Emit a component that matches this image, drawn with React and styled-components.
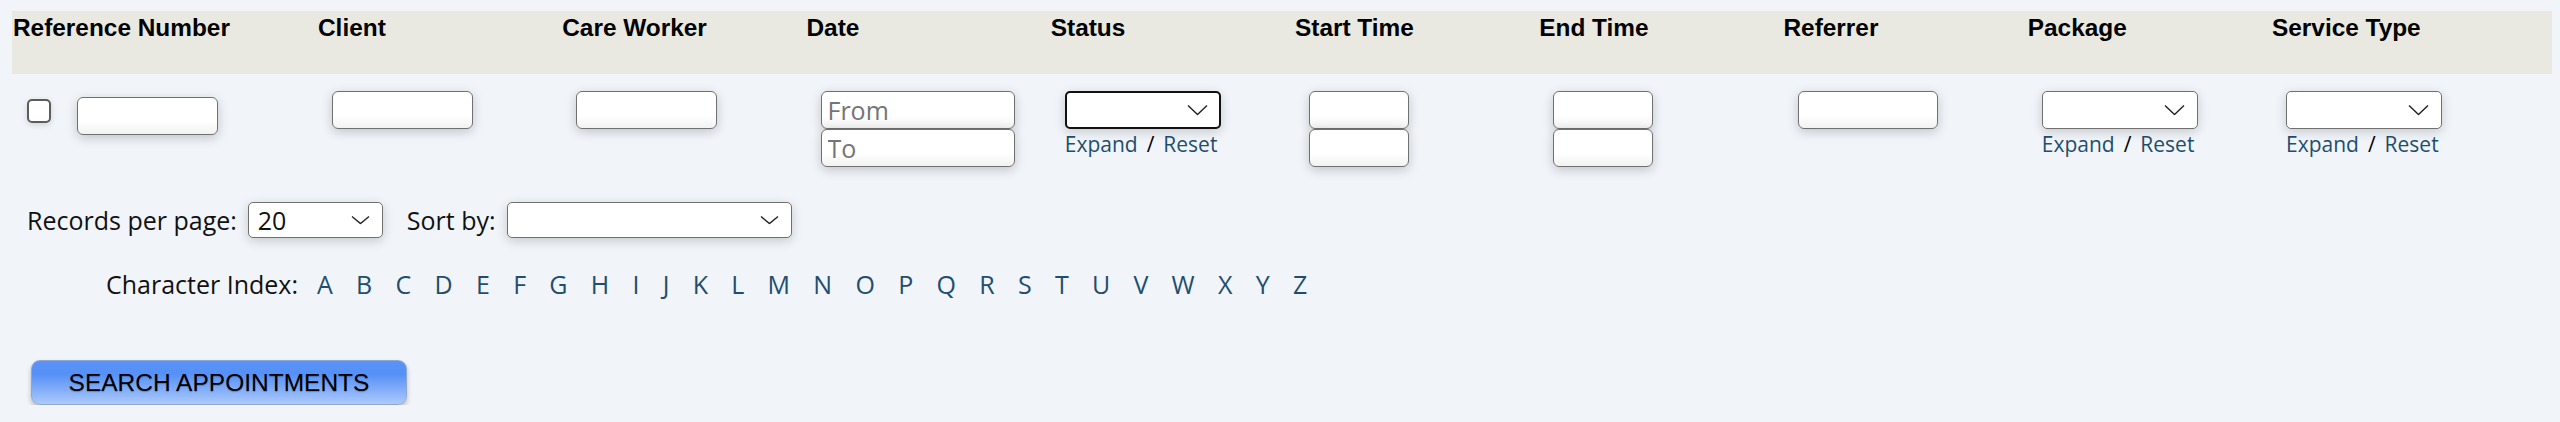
import styled, { createGlobalStyle } from 'styled-components';

const GlobalStyle = createGlobalStyle`
  html, body {
    margin: 0;
    padding: 0;
    background: #f1f5f9;
  }
  body {
    font-family: 'Open Sans', 'Liberation Sans', sans-serif;
    color: #111;
  }
  * {
    box-sizing: border-box;
  }
`;

const columns = [
  { title: 'Reference Number', kind: 'ref' },
  { title: 'Client', kind: 'text', width: 141 },
  { title: 'Care Worker', kind: 'text', width: 141 },
  { title: 'Date', kind: 'range', width: 194, placeholders: ['From', 'To'] },
  { title: 'Status', kind: 'select', focused: true },
  { title: 'Start Time', kind: 'range', width: 100 },
  { title: 'End Time', kind: 'range', width: 100 },
  { title: 'Referrer', kind: 'text', width: 140 },
  { title: 'Package', kind: 'select' },
  { title: 'Service Type', kind: 'select' },
];

const letters = 'ABCDEFGHIJKLMNOPQRSTUVWXYZ'.split('');

function Chevron({ w = 21, h = 11 }) {
  return (
    <ChevronIcon width={w} height={h} viewBox={`0 0 ${w} ${h}`}>
      <path
        d={`M1 1 L${w / 2} ${h - 1} L${w - 1} 1`}
        fill="none"
        stroke="#222"
        strokeWidth="1.4"
      />
    </ChevronIcon>
  );
}

function Dropdown({ width, height, value, focused, small }) {
  return (
    <SelectWrap $w={width}>
      <Select $h={height} $focused={focused} defaultValue={value || ''}>
        <option value={value || ''}>{value || ''}</option>
      </Select>
      {small ? <Chevron w={19} h={9} /> : <Chevron />}
    </SelectWrap>
  );
}

function FilterControl({ col }) {
  if (col.kind === 'ref') {
    return (
      <RefGroup>
        <Check type="checkbox" />
        <TextBox $w={141} $top={6} />
      </RefGroup>
    );
  }
  if (col.kind === 'text') return <TextBox $w={col.width} />;
  if (col.kind === 'range') {
    const ph = col.placeholders || ['', ''];
    return (
      <Stack>
        <TextBox $w={col.width} placeholder={ph[0]} />
        <TextBox $w={col.width} placeholder={ph[1]} />
      </Stack>
    );
  }
  return (
    <Stack>
      <Dropdown width={156} height={38} focused={col.focused} />
      <Actions>
        <ActionLink href="#">Expand</ActionLink>
        <Slash>/</Slash>
        <ActionLink href="#">Reset</ActionLink>
      </Actions>
    </Stack>
  );
}

export default function App() {
  return (
    <>
      <GlobalStyle />
      <Page>
        <HeadRow>
          {columns.map(c => (
            <HeadCell key={c.title}>{c.title}</HeadCell>
          ))}
        </HeadRow>
        <FilterRow>
          {columns.map(c => (
            <FilterCell key={c.title}>
              <FilterControl col={c} />
            </FilterCell>
          ))}
        </FilterRow>

        <OptionsRow>
          <Label>Records per page:</Label>
          <Dropdown width={135} height={36} value="20" small />
          <Label $gap={24}>Sort by:</Label>
          <Dropdown width={285} height={36} small />
        </OptionsRow>

        <IndexRow>
          <IndexLabel>Character Index:</IndexLabel>
          {letters.map(l => (
            <Letter key={l} href="#">
              {l}
            </Letter>
          ))}
        </IndexRow>

        <SearchButton type="button">SEARCH APPOINTMENTS</SearchButton>
      </Page>
    </>
  );
}

const Page = styled.div`
  padding: 11px 8px 0 12px;
  background: #f1f5f9;
`;

const Grid = styled.div`
  display: grid;
  grid-template-columns: 305px repeat(8, 244.25px) 1fr;
`;

const HeadRow = styled(Grid)`
  height: 63px;
  background: #e9e9e2;
`;

const HeadCell = styled.div`
  padding: 3px 1px 0;
  font-family: 'Liberation Sans', Arial, sans-serif;
  font-size: 24.4px;
  font-weight: 700;
  color: #000;
  white-space: nowrap;
`;

const FilterRow = styled(Grid)`
  padding-top: 17px;
`;

const FilterCell = styled.div`
  padding-left: 15px;
`;

const RefGroup = styled.div`
  display: flex;
  align-items: flex-start;
  gap: 26px;
`;

const Check = styled.input`
  appearance: none;
  width: 24px;
  height: 24px;
  margin: 8px 0 0;
  border: 2px solid #5c5c5c;
  border-radius: 5px;
  background: #fff;
  box-shadow: 0 2px 6px rgba(0, 0, 0, 0.14);
`;

const TextBox = styled.input`
  display: block;
  width: ${({ $w }) => $w}px;
  height: 38px;
  margin-top: ${({ $top }) => $top || 0}px;
  padding: 0 6px;
  border: 1.5px solid #707070;
  border-radius: 6px;
  background: linear-gradient(#fff 65%, #f2f2f2);
  box-shadow: 0 3px 11px rgba(0, 0, 0, 0.2);
  font-family: 'Open Sans', sans-serif;
  font-size: 25px;
  color: #333;
  outline: none;

  ::placeholder {
    color: #555;
  }
`;

const Stack = styled.div`
  display: flex;
  flex-direction: column;
  align-items: flex-start;
`;

const SelectWrap = styled.div`
  position: relative;
  width: ${({ $w }) => $w}px;
  flex: none;
`;

const Select = styled.select`
  appearance: none;
  display: block;
  width: 100%;
  height: ${({ $h }) => $h}px;
  padding: 0 40px 0 9px;
  border: ${({ $focused }) => ($focused ? '2px solid #111' : '1.5px solid #707070')};
  border-radius: 5px;
  background: #fff;
  box-shadow: 0 3px 11px rgba(0, 0, 0, 0.18);
  font-family: 'Open Sans', sans-serif;
  font-size: 25px;
  color: #111;
  outline: none;
`;

const ChevronIcon = styled.svg`
  position: absolute;
  right: 13px;
  top: 50%;
  transform: translateY(-50%);
  pointer-events: none;
`;

const Actions = styled.div`
  display: flex;
  align-items: baseline;
  margin-top: 1px;
  font-size: 21px;
  line-height: 28px;
`;

const ActionLink = styled.a`
  color: #1f4e6e;
  text-decoration: none;
`;

const Slash = styled.span`
  margin: 0 9px;
  color: #000;
`;

const OptionsRow = styled.div`
  display: flex;
  align-items: center;
  margin-top: 35px;
  padding-left: 15px;
`;

const Label = styled.span`
  margin: 0 11px 0 ${({ $gap }) => $gap || 0}px;
  font-size: 25px;
  color: #111;
  white-space: nowrap;
`;

const IndexRow = styled.div`
  display: flex;
  align-items: baseline;
  margin-top: 29px;
  padding-left: 94px;
  font-size: 25px;
  line-height: 34px;
`;

const IndexLabel = styled.span`
  margin-right: 19px;
  color: #111;
`;

const Letter = styled.a`
  margin-right: 23.28px;
  color: #1f4e6e;
  text-decoration: none;
`;

const SearchButton = styled.button`
  display: block;
  width: 376px;
  height: 45px;
  margin: 59px 0 0 19px;
  border: 1px solid #8ea8d4;
  border-radius: 9px;
  background: linear-gradient(#5b93f7, #5590f6 30%, #acc9fb);
  box-shadow: 0 3px 5px rgba(0, 0, 0, 0.25);
  font-family: 'Liberation Sans', Arial, sans-serif;
  font-size: 24.5px;
  color: #000;
  text-shadow: 0 1px 1px rgba(0, 0, 0, 0.25);
  cursor: pointer;
`;
